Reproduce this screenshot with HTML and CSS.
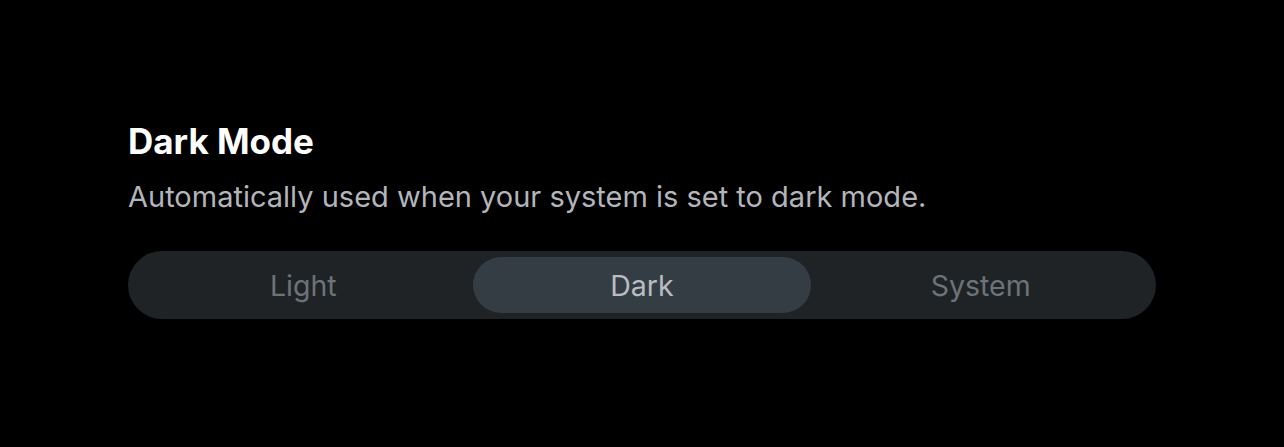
FILE: index.html
```html
<!DOCTYPE html>
<html>
<head>
<meta charset="utf-8">
<link rel="stylesheet" href="styles.css">
</head>
<body>
<main class="page">
  <section class="setting">
    <h2 class="title">Dark Mode</h2>
    <p class="desc">Automatically used when your system is set to dark mode.</p>
    <div class="segmented">
      <button class="seg">Light</button>
      <button class="seg active">Dark</button>
      <button class="seg">System</button>
    </div>
  </section>
</main>
</body>
</html>
```
FILE: styles.css
```css
html, body {
  margin: 0;
  padding: 0;
  background: #000;
  width: 1284px;
  height: 447px;
  overflow: hidden;
}
body {
  font-family: Inter, "Noto Sans", sans-serif;
}
.page {
  padding: 120px 128px 0 128px;
}
.setting {
  width: 1028px;
}
.title {
  margin: 0;
  font-size: 35px;
  line-height: 42px;
  font-weight: 700;
  color: #ffffff;
}
.desc {
  margin: 17px 0 0 0;
  font-size: 29px;
  line-height: 36px;
  color: #b2b6bb;
}
.segmented {
  margin-top: 36px;
  display: grid;
  grid-template-columns: 1fr 1fr 1fr;
  padding: 6px;
  height: 68px;
  box-sizing: border-box;
  background: #1f2326;
  border-radius: 34px;
}
.seg {
  border: none;
  background: transparent;
  border-radius: 28px;
  font-family: inherit;
  font-size: 28.5px;
  color: #6c7379;
  padding: 0;
  cursor: pointer;
}
.seg.active {
  background: #343c44;
  color: #b9bdc2;
}
```
